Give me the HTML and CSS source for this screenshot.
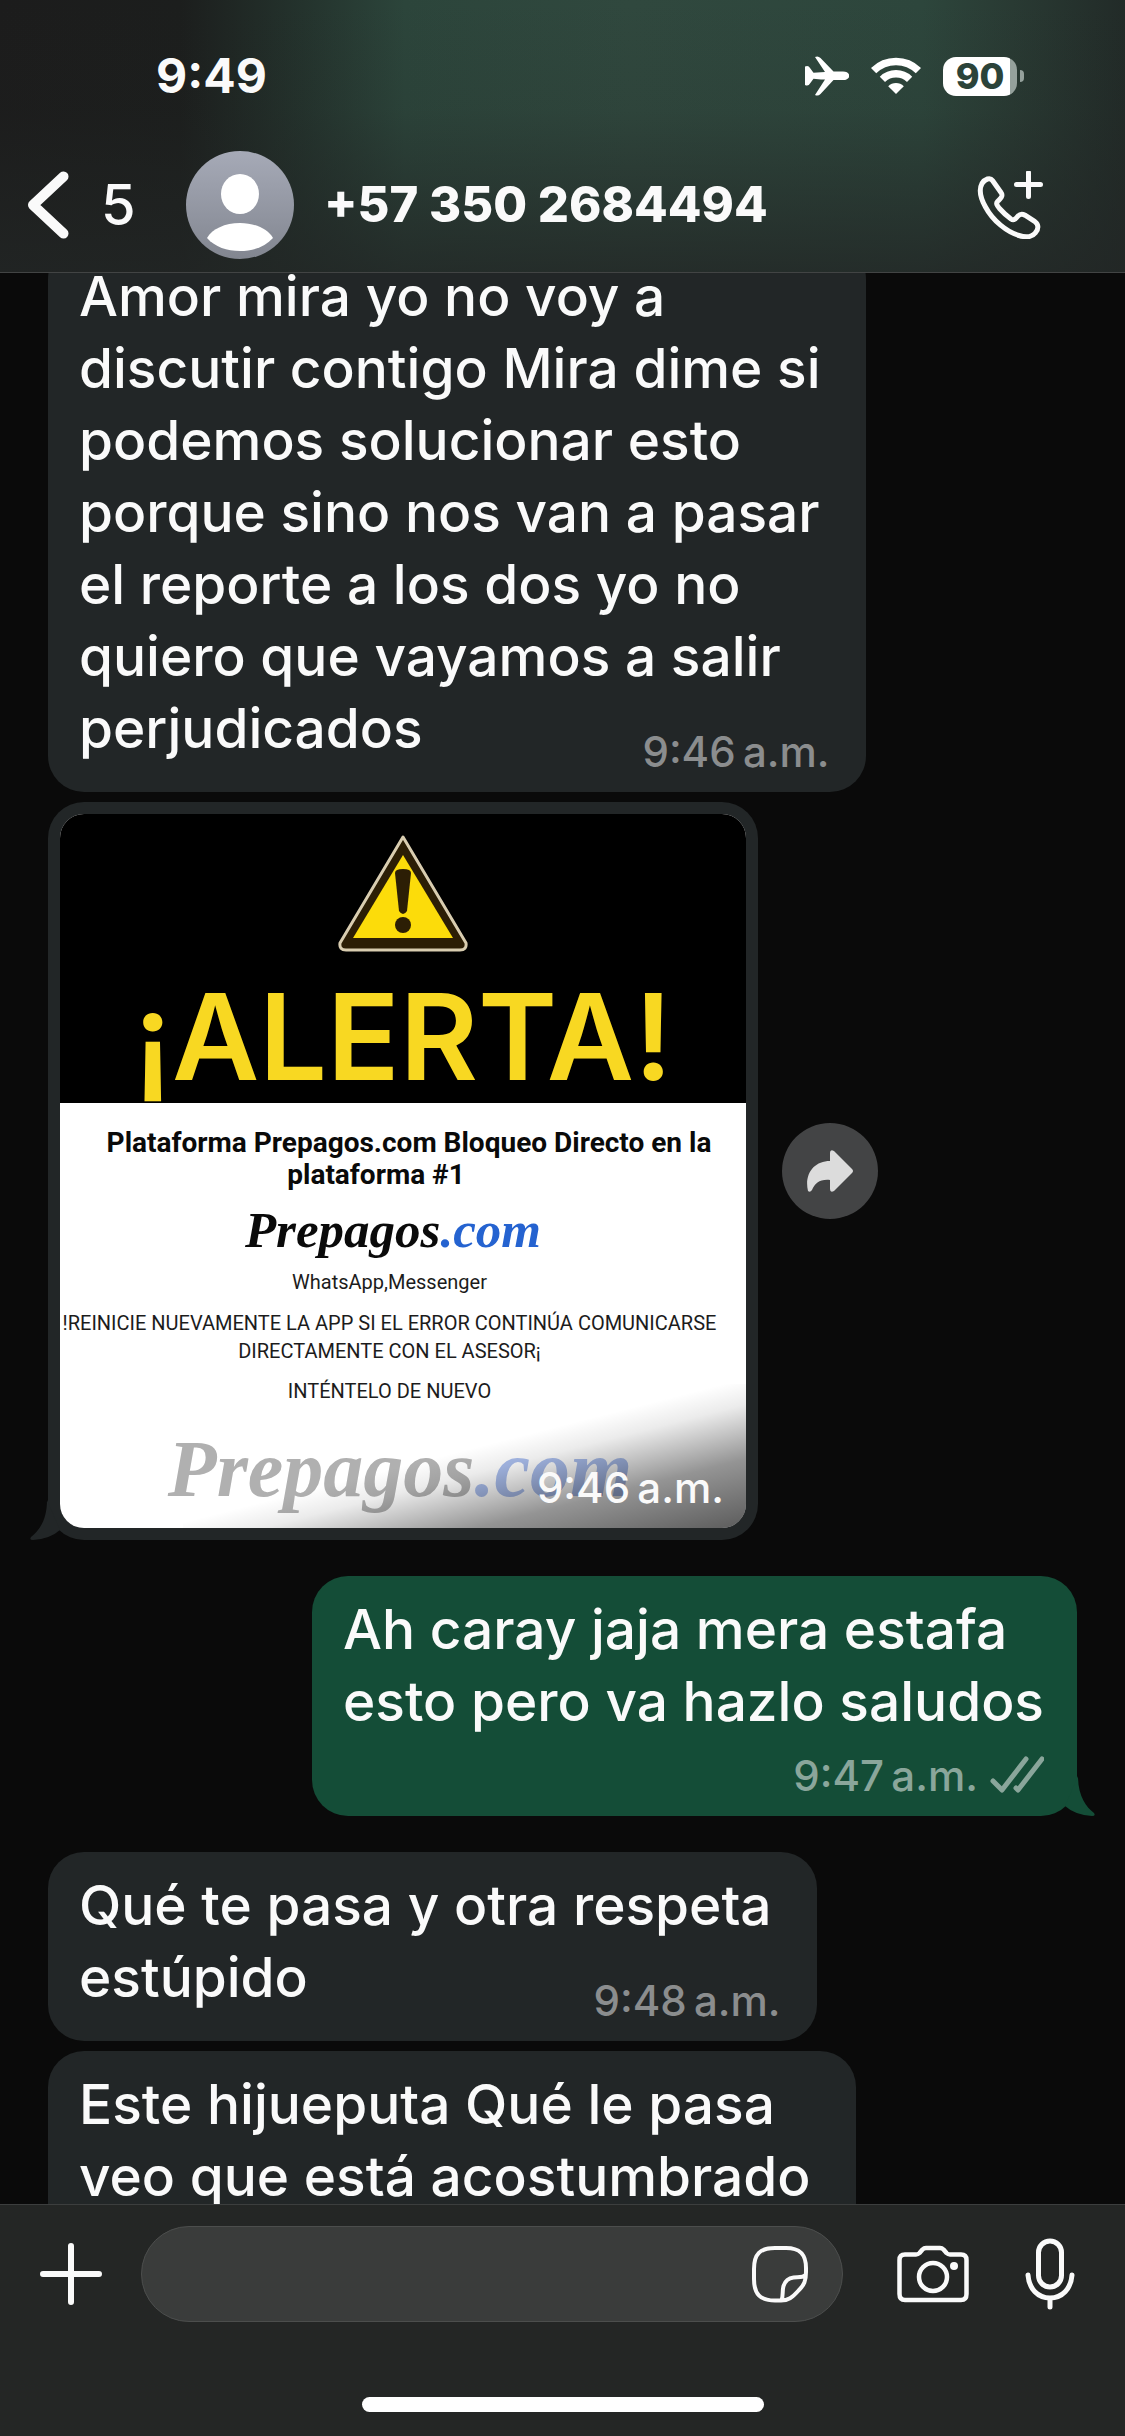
FILE: index.html
```html
<!DOCTYPE html>
<html lang="es">
<head>
<meta charset="utf-8">
<meta name="viewport" content="width=device-width, initial-scale=1">
<title>+57 350 2684494</title>
<link rel="stylesheet" href="styles.css">
</head>
<body>
<div class="app">
  <header class="top">
    <div class="status">
      <span class="clock">9:49</span>
      <div class="status-icons">
        <svg class="plane" viewBox="0 0 44 40" width="44" height="40" aria-label="Modo avión"><path fill="#fff" d="M0 10.500q3.500-1.500 5 1.500l3.500 4.800 7.500-.6 4-.2L10 1q3-1.500 5.500 1L28.500 15.600H38c4 0 6.300 2 6.300 4.200S42 24 38 24H28.500L15.500 38q-2.500 2.500-5.500 1l10-15.400-4-.2-7.500-.6L5 27.600q-1.500 3-5 1.500z"/></svg>
        <svg class="wifi" viewBox="0 0 50 38" width="50" height="38" aria-label="Wi-Fi"><g fill="none" stroke="#fff" stroke-width="7.500"><path d="M2.600 13.600a32 32 0 0 1 44.800 0"/><path d="M11.400 22.400a19.500 19.500 0 0 1 27.200 0"/></g><path fill="#fff" d="M25 37l-7.800-7.800a11 11 0 0 1 15.600 0z"/></svg>
        <div class="battery"><span class="battery-level">90</span><i class="battery-tip"></i></div>
      </div>
    </div>
    <div class="bar">
      <a class="back" href="#" aria-label="Atrás, 5 chats sin leer">
        <svg viewBox="0 0 42 68" width="42" height="68" aria-hidden="true"><path d="M36.500 5.500L6 34l30.500 28.500" fill="none" stroke="#fafafa" stroke-width="10" stroke-linecap="round" stroke-linejoin="round"/></svg>
        <span>5</span>
      </a>
      <a class="contact" href="#">
        <svg class="avatar" viewBox="0 0 108 108" width="108" height="108" aria-hidden="true"><defs><linearGradient id="av" x1="0" y1="0" x2="0" y2="1"><stop offset="0" stop-color="#a6aab7"/><stop offset="1" stop-color="#828690"/></linearGradient></defs><circle cx="54" cy="54" r="54" fill="url(#av)"/><ellipse cx="54" cy="43" rx="19" ry="20" fill="#fff"/><path fill="#fff" d="M21 87c5-9 18-15 33-15s28 6 33 15c-8 9-20 13-33 13s-25-4-33-13z"/></svg>
        <h1>+57 350 2684494</h1>
      </a>
      <button class="icon call" type="button" aria-label="Llamar">
        <svg viewBox="0 0 68 68" width="68" height="68"><g fill="none" stroke="#fafafa" stroke-width="5" stroke-linecap="round" stroke-linejoin="round"><path d="M6 12.500C9 8 14 6 16.500 9.500l8.500 12c3 4-1 6.500-3.500 9-2 2 0 4.500 2 7 4 4.500 8 8 11.500 10.500 3 2 5-.5 7-3 2-2 4-2.500 7-.8l10 6.500c4 2.800 3.500 7.500.5 11-3.500 4.500-9.500 5-16.500 2.800C31 61 17 50 9.500 36 4.500 27 3 18 6 12.500z"/><path d="M40.500 13.500h24M52.500 1.500v24"/></g></svg>
      </button>
    </div>
  </header>

  <main class="chat">
    <article class="bubble in first">
      <p>Amor mira yo no voy a<br>discutir contigo Mira dime si<br>podemos solucionar esto<br>porque sino nos van a pasar<br>el reporte a los dos yo no<br>quiero que vayamos a salir<br>perjudicados</p>
      <time>9:46&#8201;a.m.</time>
    </article>

    <div class="media-row">
      <article class="media">
        <figure class="picture">
          <div class="alert">
            <svg viewBox="0 0 130 117" width="130" height="117" aria-hidden="true"><path d="M65 2L128 108q1 7-6 7H8q-7 0-6-7z" fill="#2c1e05" stroke="#d9cdb0" stroke-width="3" stroke-linejoin="round"/><path d="M65 20l50 83H15z" fill="#fcdc0a"/><path d="M57 38q0-4 8-4t8 4l-4 38q-4 6-8 0z" fill="#2c1e05"/><circle cx="65" cy="90" r="8" fill="#2c1e05"/></svg>
            <h2>¡ALERTA!</h2>
          </div>
          <div class="notice">
            <p class="headline"><span>Plataforma Prepagos.com Bloqueo Directo en la</span> <span class="second">plataforma #1</span></p>
            <p class="brand">Prepagos<b>.com</b></p>
            <p class="apps">WhatsApp,Messenger</p>
            <p class="restart">!REINICIE NUEVAMENTE LA APP SI EL ERROR CONTINÚA COMUNICARSE<br>DIRECTAMENTE CON EL ASESOR¡</p>
            <p class="retry">INTÉNTELO DE NUEVO</p>
            <p class="brand watermark">Prepagos<b>.com</b></p>
          </div>
          <figcaption><time>9:46&#8201;a.m.</time></figcaption>
        </figure>
        <svg class="tail tail-in" viewBox="0 0 36 40" width="36" height="40" aria-hidden="true"><path d="M17 0C17 20 9 31 1 37q-2 3 2 3 17-1 27-10z"/></svg>
      </article>
      <button class="forward" type="button" aria-label="Reenviar">
        <svg viewBox="0 0 50 44" width="50" height="44"><path fill="#dcdcdc" d="M25 4q0-4 4-2l18 18q2 2 0 4L29 42q-4 2-4-2V31C15 30 10 34 7 41q-2 3-4 1C-1 25 9 12 25 12z"/></svg>
      </button>
    </div>

    <article class="bubble out">
      <p>Ah caray jaja mera estafa<br>esto pero va hazlo saludos</p>
      <div class="meta">
        <time>9:47&#8201;a.m.</time>
        <svg viewBox="0 0 54 38" width="54" height="38" aria-label="Entregado"><path d="M3 25l9 9L36 3M26 32l2 2L52 3" fill="none" stroke="#8aa69b" stroke-width="5" stroke-linecap="round" stroke-linejoin="round"/></svg>
      </div>
      <svg class="tail tail-out" viewBox="0 0 36 40" width="36" height="40" aria-hidden="true"><path d="M19 0C19 20 27 31 35 37q2 3-2 3-17-1-27-10z"/></svg>
    </article>

    <article class="bubble in">
      <p>Qué te pasa y otra respeta<br>estúpido</p>
      <time>9:48&#8201;a.m.</time>
    </article>

    <article class="bubble in">
      <p>Este hijueputa Qué le pasa<br>veo que está acostumbrado</p>
    </article>
  </main>

  <footer class="composer">
    <form class="compose-row">
      <button class="icon" type="button" aria-label="Adjuntar">
        <svg viewBox="0 0 62 62" width="62" height="62"><path d="M3 31h56M31 3v56" stroke="#fafafa" stroke-width="6" stroke-linecap="round"/></svg>
      </button>
      <div class="field">
        <input type="text" aria-label="Mensaje">
        <button class="icon" type="button" aria-label="Stickers">
          <svg viewBox="0 0 58 58" width="58" height="58"><path d="M30 55.500h-6C9 55.500 3 49 3 34V24C3 9 9 3 24 3h11c14 0 20 6 20 20v4c0 9-2 13-7 18-7 8-11 10.500-18 10.500zM30.500 55c2-4 .5-9 2-14 2-6 5-8 10-8.500 5-.5 10 .5 12.500-3" fill="none" stroke="#fafafa" stroke-width="4" stroke-linejoin="round"/></svg>
        </button>
      </div>
      <button class="icon" type="button" aria-label="Cámara">
        <svg viewBox="0 0 72 58" width="72" height="58"><g fill="none" stroke="#fafafa" stroke-width="4.500" stroke-linejoin="round"><path d="M8 9.500h11q2 0 3.500-1.500l3-3.500q1.500-1.500 3.500-1.500h14q2 0 3.500 1.500l3 3.500q1.500 1.500 3.500 1.500h11q5.500 0 5.500 5.500V49q0 6-5.500 6H8q-5.500 0-5.500-6V15q0-5.500 5.500-5.500z"/><circle cx="36" cy="32" r="14"/></g><circle cx="57" cy="21" r="4" fill="#fafafa"/></svg>
      </button>
      <button class="icon mic" type="button" aria-label="Grabar audio">
        <svg viewBox="0 0 50 72" width="50" height="72"><g fill="none" stroke="#fafafa" stroke-width="5" stroke-linecap="round"><rect x="13.500" y="3" width="23" height="46" rx="11.500"/><path d="M3 37c1 14 10 23 22 23s21-9 22-23M25 60v9"/></g></svg>
      </button>
    </form>
    <div class="home"></div>
  </footer>
</div>
</body>
</html>
```
FILE: styles.css
```css
* { box-sizing: border-box; }

body {
  margin: 0;
  background: #0a0a0a;
  color: #fafafa;
  font-family: Inter, "Liberation Sans", sans-serif;
}

h1, h2, p, figure { margin: 0; }
svg { display: block; flex: none; }
a { color: inherit; text-decoration: none; }

button {
  padding: 0;
  border: 0;
  background: none;
  color: inherit;
  font: inherit;
}

.icon { display: flex; flex: none; }

.app {
  display: flex;
  flex-direction: column;
  height: 100vh;
}

/* Header */
.top {
  position: relative;
  z-index: 1;
  flex: none;
  border-bottom: 1px solid #424444;
  background:
    linear-gradient(to bottom, rgba(30, 32, 31, 0) 0%, rgba(32, 36, 34, 0.1) 40%, rgba(34, 38, 37, 0.8) 100%),
    linear-gradient(to right, #1c1c1c 0%, #1c1e1d 16%, #24332d 27%, #2c453b 36%, #30483e 56%, #2d463c 82%, #293a33 90%, #222b28 100%);
}

.status {
  display: flex;
  align-items: center;
  justify-content: space-between;
  padding: 52px 101px 0 156px;
}

.clock {
  font-size: 48px;
  line-height: 48px;
  font-weight: 700;
}

.status-icons { display: flex; align-items: center; gap: 22px; }
.battery { display: flex; align-items: center; gap: 3px; }

.battery-level {
  width: 74px;
  border-radius: 13px;
  background: linear-gradient(to right, #fff 67px, #95a19c 67px);
  color: #2b4339;
  font-size: 36px;
  line-height: 39px;
  font-weight: 800;
  text-align: center;
}

.battery-tip {
  width: 4px;
  height: 12px;
  border-radius: 0 4px 4px 0;
  background: #95a19c;
}

.bar {
  display: flex;
  align-items: center;
  padding: 51px 81px 13px 27px;
}

.back {
  display: flex;
  align-items: center;
  gap: 32px;
  width: 159px;
  font-size: 56px;
  line-height: 64px;
  font-weight: 500;
}

.contact {
  display: flex;
  align-items: center;
  flex: 1;
  gap: 30px;
}

h1 {
  font-size: 49px;
  line-height: 56px;
  font-weight: 800;
  white-space: nowrap;
}

/* Messages */
.chat {
  display: flex;
  flex-direction: column;
  flex: 1;
  align-items: flex-start;
  gap: 10px;
  min-height: 0;
  overflow: hidden;
  padding: 0 48px;
}

.chat > * { flex: none; }

.bubble {
  position: relative;
  display: grid;
  padding: 17px 45px 20px 31px;
  border-radius: 36px;
  background: #222627;
}

.first { margin-top: -30px; }

.bubble p {
  grid-area: 1 / 1;
  padding-bottom: 8px;
  font-size: 55px;
  line-height: 72px;
  font-weight: 500;
  white-space: nowrap;
}

time {
  font-size: 42px;
  line-height: 40px;
  font-weight: 500;
  white-space: nowrap;
}

.in time {
  grid-area: 1 / 1;
  place-self: end;
  margin-right: -9px;
  color: #8b8d8e;
}

.out {
  align-self: flex-end;
  margin: 26px 0;
  padding: 17px 33px 20px 31px;
  background: #144d37;
}

.out .meta {
  display: flex;
  justify-content: flex-end;
  gap: 12px;
  margin-top: 11px;
  color: #8aa69b;
}

.tail { position: absolute; bottom: 0; }
.tail-in { left: -18px; fill: #222627; }
.tail-out { right: -18px; fill: #144d37; }

/* Picture message */
.media-row { display: flex; align-items: center; gap: 24px; }

.media {
  position: relative;
  width: 710px;
  padding: 12px;
  border-radius: 36px;
  background: #222627;
}

.picture {
  position: relative;
  z-index: 1;
  overflow: hidden;
  border-radius: 24px;
  background: #fff;
}

.alert {
  display: flex;
  flex-direction: column;
  align-items: center;
  gap: 25px;
  padding: 21px 0 6px;
  background: #000;
}

h2 {
  color: #f8d822;
  font-size: 120px;
  line-height: 120px;
  font-weight: 600;
}

.notice {
  padding: 24px 0 14px;
  color: #1c1c1c;
  font-family: Roboto, "Liberation Sans", sans-serif;
  font-size: 20px;
  line-height: 28px;
  text-align: center;
}

.notice p { padding-right: 27px; white-space: nowrap; }

.notice .headline {
  padding: 0;
  color: #0a0a0a;
  font-size: 28px;
  line-height: 32px;
  font-weight: 700;
}

.headline span { display: block; padding-left: 12px; }
.headline .second { padding: 0 54px 0 0; }

.notice .brand {
  margin-top: 9px;
  padding-right: 20px;
  color: #0a0a0a;
  font-family: "Liberation Serif", serif;
  font-size: 51px;
  line-height: 60px;
  font-weight: 700;
  font-style: italic;
}

.brand b { color: #2563d0; }
.apps { margin-top: 8px; }
.restart { margin-top: 13px; }
.retry { margin-top: 12px; }

.notice .watermark {
  margin-top: 19px;
  padding-right: 6px;
  color: #b0b0b0;
  font-size: 80px;
  line-height: 90px;
}

.watermark b { color: #a9bdec; }

figcaption {
  position: absolute;
  inset: auto 0 0 18%;
  display: flex;
  align-items: flex-end;
  justify-content: flex-end;
  height: 144px;
  padding: 0 22px 20px;
  background: linear-gradient(to bottom right, rgba(0, 0, 0, 0) 48%, rgba(0, 0, 0, 0.08) 57%, rgba(0, 0, 0, 0.42) 76%, rgba(0, 0, 0, 0.64) 100%);
}

.forward {
  display: grid;
  place-items: center;
  width: 96px;
  height: 96px;
  border-radius: 50%;
  background: #434445;
}

/* Composer */
.composer {
  flex: none;
  padding: 21px 0 24px;
  border-top: 1px solid #3c3e3e;
  background: #242625;
}

.compose-row {
  display: flex;
  align-items: center;
  margin-bottom: 75px;
  padding: 0 50px 0 40px;
}

.field {
  display: flex;
  align-items: center;
  flex: 1;
  min-width: 0;
  height: 96px;
  margin: 0 54px 0 39px;
  padding: 0 33px 0 40px;
  border: 1px solid #4c4e4d;
  border-radius: 48px;
  background: #3a3c3b;
}

.field input {
  flex: 1;
  min-width: 0;
  border: 0;
  outline: 0;
  background: none;
  color: inherit;
  font: inherit;
  font-size: 55px;
}

.mic { margin-left: 56px; }

.home {
  width: 402px;
  height: 15px;
  margin: 0 auto;
  border-radius: 8px;
  background: #fff;
}
```
